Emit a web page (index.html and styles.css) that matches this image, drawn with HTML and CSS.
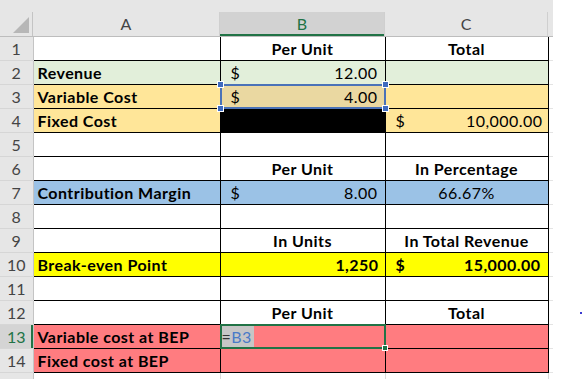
FILE: index.html
```html
<!DOCTYPE html>
<html>
<head>
<meta charset="utf-8">
<link rel="stylesheet" href="styles.css">
</head>
<body>
<div class="sheet">
<table class="grid">
<colgroup><col class="w-rh"><col class="w-a"><col class="w-b"><col class="w-c"><col class="w-x"></colgroup>
<thead>
<tr class="hdr">
<th class="corner"><div class="hi"><span class="tri"></span></div></th>
<th><div class="hi">A</div></th>
<th class="actcol"><div class="hi">B</div></th>
<th><div class="hi">C</div></th>
<th class="hx"><div class="hi"></div></th>
</tr>
</thead>
<tbody>
<tr><td class="rh">1</td><td class="c"></td><td class="c ctr b">Per Unit</td><td class="c ctr b">Total</td><td class="x"></td></tr>
<tr><td class="rh">2</td><td class="c g b lbl">Revenue</td><td class="c g"><div class="acc"><span>$</span><span>12.00</span></div></td><td class="c g"></td><td class="x"></td></tr>
<tr><td class="rh">3</td><td class="c o b lbl">Variable Cost</td><td class="c o sel"><div class="acc"><span>$</span><span>4.00</span></div><div class="copysel"><i class="h tl"></i><i class="h tr"></i><i class="h bl"></i><i class="h br"></i></div></td><td class="c o"></td><td class="x"></td></tr>
<tr><td class="rh">4</td><td class="c o b lbl">Fixed Cost</td><td class="c blk"></td><td class="c o"><div class="acc accc"><span>$</span><span>10,000.00</span></div></td><td class="x"></td></tr>
<tr><td class="rh">5</td><td class="c"></td><td class="c"></td><td class="c"></td><td class="x"></td></tr>
<tr><td class="rh">6</td><td class="c"></td><td class="c ctr b">Per Unit</td><td class="c ctr b">In Percentage</td><td class="x"></td></tr>
<tr><td class="rh">7</td><td class="c bl b lbl">Contribution Margin</td><td class="c bl"><div class="acc"><span>$</span><span>8.00</span></div></td><td class="c bl ctr">66.67%</td><td class="x"></td></tr>
<tr><td class="rh">8</td><td class="c"></td><td class="c"></td><td class="c"></td><td class="x"></td></tr>
<tr><td class="rh">9</td><td class="c"></td><td class="c ctr b">In Units</td><td class="c ctr b">In Total Revenue</td><td class="x"></td></tr>
<tr><td class="rh">10</td><td class="c y b lbl">Break-even Point</td><td class="c y b rt">1,250</td><td class="c y b"><div class="acc accc2"><span>$</span><span>15,000.00</span></div></td><td class="x"></td></tr>
<tr><td class="rh">11</td><td class="c"></td><td class="c"></td><td class="c"></td><td class="x"></td></tr>
<tr><td class="rh">12</td><td class="c"></td><td class="c ctr b">Per Unit</td><td class="c ctr b">Total</td><td class="x"></td></tr>
<tr><td class="rh actrow">13</td><td class="c r b lbl">Variable cost at BEP</td><td class="c r act"><span class="edit"><span class="eq">=</span><span class="ref">B3</span></span><div class="actbox"><i class="fill"></i></div></td><td class="c r"></td><td class="x"></td></tr>
<tr><td class="rh">14</td><td class="c r b lbl">Fixed cost at BEP</td><td class="c r"></td><td class="c r"></td><td class="x"></td></tr>
<tr><td class="rh"></td><td class="e"></td><td class="e"></td><td class="e"></td><td class="x"></td></tr>
</tbody>
</table>
<i class="dot"></i>
</div>
</body>
</html>
```

FILE: styles.css
```css
html, body { margin: 0; padding: 0; background: #fff; }
body { font-family: Lato, "Liberation Sans", sans-serif; color: #000; }
.sheet { position: relative; width: 583px; height: 379px; overflow: hidden; background: #fff; }

.grid { border-collapse: collapse; table-layout: fixed; width: 553px; }
.w-rh { width: 33px; }
.w-a { width: 187px; }
.w-b { width: 165px; }
.w-c { width: 163px; }
.w-x { width: 5px; }

.hdr th { height: 36px; padding: 0; background: #e6e6e6; border: none; border-bottom: 1px solid #bdbdbd; vertical-align: bottom; font-weight: normal; font-size: 16px; color: #444; }
.hdr .hi { height: 24px; line-height: 24px; text-align: center; border-right: 1px solid #cfcfcf; box-sizing: border-box; }
.hdr .corner .hi { position: relative; border-right: 1px solid #c4c4c4; }
.tri { position: absolute; right: 3px; bottom: 3px; width: 0; height: 0; border-left: 16px solid transparent; border-bottom: 16px solid #b7b7b7; }
.hdr .actcol .hi { background: #d2d2d2; color: #217346; box-shadow: inset 0 -2px 0 #217346; }
.hdr .hx .hi { border-right: none; }

tbody tr { height: 24px; }
td { padding: 0; font-size: 16px; line-height: 22px; letter-spacing: 0.45px; white-space: nowrap; overflow: visible; }
.rh { background: #e6e6e6; color: #444; text-align: center; border-bottom: 1px solid #d6d6d6; border-right: 1px solid #c4c4c4; font-size: 16px; letter-spacing: 0; }
.actrow { background: #d4d4d4; color: #217346; box-shadow: inset -2px 0 0 #217346; }
.c { border: 1px solid #000; }
.e { border-right: 1px solid #dadada; }
.x { border-bottom: 1px solid #e4e4e4; }

.b { font-weight: bold; }
.ctr { text-align: center; }
.rt { text-align: right; padding-right: 6px; }
.lbl { padding-left: 4px; }
.g { background: #e2efda; }
.o { background: #ffe699; }
.bl { background: #9bc2e6; }
.y { background: #ffff00; }
.r { background: #ff7c80; }
.blk { background: #000; }

.acc { display: flex; justify-content: space-between; padding: 0 7px 0 10px; }
.accc { padding: 0 5px 0 10px; }
.accc2 { padding: 0 7px 0 10px; }

.sel { position: relative; background: #ead8a1; }
.copysel { position: absolute; left: -1px; top: -1px; right: -1px; bottom: -1px; border: 2px solid #4a72b8; }
.h { position: absolute; width: 5px; height: 5px; background: #3f6bbf; border: 1px solid #fff; }
.h.tl { left: -5px; top: -5px; }
.h.tr { right: -5px; top: -5px; }
.h.bl { left: -5px; bottom: -5px; }
.h.br { right: -5px; bottom: -5px; }

.act { position: relative; }
.edit { display: inline-block; margin-left: 1px; padding: 0 2px 0 0; background: #c6c6c6; height: 22px; vertical-align: top; }
.eq { color: #333; }
.ref { color: #4a7ac8; }
.actbox { position: absolute; left: -1px; top: -1px; right: -1px; bottom: -1px; border: 2px solid #217346; }
.fill { position: absolute; right: -4px; bottom: -4px; width: 4px; height: 4px; background: #217346; border: 1px solid #fff; }

.dot { position: absolute; left: 580px; top: 312px; width: 2px; height: 2px; background: #3a3ad0; }
```
